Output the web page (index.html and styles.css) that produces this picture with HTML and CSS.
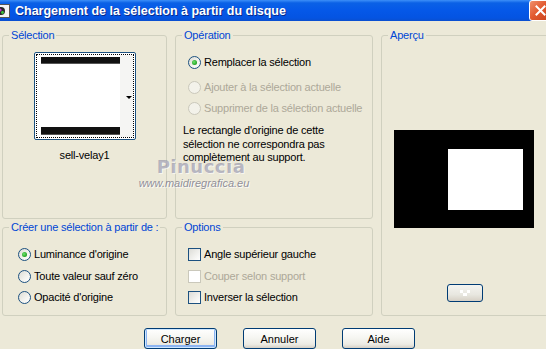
FILE: index.html
```html
<!DOCTYPE html>
<html lang="fr">
<head>
  <meta charset="UTF-8">
  <meta name="viewport" content="width=device-width, initial-scale=1.0">
  <title>Chargement de la sélection à partir du disque</title>
  <link rel="stylesheet" href="styles.css">
</head>
<body>
  <div class="window">
    <div class="titlebar">
      <span class="app-icon">
        <svg width="14" height="14" viewBox="0 0 14 14">
          <rect x="0.5" y="0.5" width="13" height="13" fill="#f4f4f4" stroke="#555"/>
          <circle cx="5" cy="7" r="4" fill="#2a2a2a"/>
          <circle cx="4" cy="6" r="1.6" fill="#d23ad0"/>
          <circle cx="6.5" cy="8.5" r="1.4" fill="#3cc43c"/>
        </svg>
      </span>
      <span class="title">Chargement de la sélection à partir du disque</span>
      <span class="close-btn">
        <svg width="11" height="11" viewBox="0 0 11 11">
          <path d="M1.5 1.5 L9.5 9.5 M9.5 1.5 L1.5 9.5" stroke="#fff" stroke-width="2" stroke-linecap="square"/>
        </svg>
      </span>
    </div>

    <div class="panels">
      <fieldset class="group group-selection">
        <legend>Sélection</legend>
        <div class="thumb">
          <div class="thumb-focus">
            <div class="thumb-image">
              <span class="bar bar-top"></span>
              <span class="bar bar-bottom"></span>
            </div>
            <div class="thumb-strip"><span class="arrow-down"></span></div>
          </div>
        </div>
        <div class="thumb-name">sell-velay1</div>
      </fieldset>

      <fieldset class="group group-operation">
        <legend>Opération</legend>
        <label class="choice op-1"><span class="radio checked"></span>Remplacer la sélection</label>
        <label class="choice op-2 disabled"><span class="radio"></span>Ajouter à la sélection actuelle</label>
        <label class="choice op-3 disabled"><span class="radio"></span>Supprimer de la sélection actuelle</label>
        <p class="note">Le rectangle d'origine de cette<br>sélection ne correspondra pas<br>complètement au support.</p>
      </fieldset>

      <fieldset class="group group-preview">
        <legend>Aperçu</legend>
        <div class="preview">
          <div class="preview-sel"></div>
        </div>
        <button class="btn btn-small" type="button">
          <svg width="14" height="8" viewBox="0 0 14 8">
            <rect x="2" y="1" width="3" height="3" fill="#fff"/>
            <rect x="9" y="1" width="3" height="3" fill="#fff"/>
            <rect x="5" y="4" width="4" height="3" fill="#fff"/>
          </svg>
        </button>
      </fieldset>

      <fieldset class="group group-source">
        <legend>Créer une sélection à partir de :</legend>
        <div class="choices">
          <label class="choice"><span class="radio checked"></span>Luminance d'origine</label>
          <label class="choice"><span class="radio"></span>Toute valeur sauf zéro</label>
          <label class="choice"><span class="radio"></span>Opacité d'origine</label>
        </div>
      </fieldset>

      <fieldset class="group group-options">
        <legend>Options</legend>
        <div class="choices">
          <label class="choice"><span class="check"></span>Angle supérieur gauche</label>
          <label class="choice disabled"><span class="check"></span>Couper selon support</label>
          <label class="choice"><span class="check"></span>Inverser la sélection</label>
        </div>
      </fieldset>
    </div>

    <div class="actions">
      <button class="btn btn-default" type="button">Charger</button>
      <button class="btn" type="button">Annuler</button>
      <button class="btn" type="button">Aide</button>
    </div>

    <div class="watermark">
      <span class="wm-name">Pinuccia</span>
      <span class="wm-url">www.maidiregrafica.eu</span>
    </div>
  </div>
</body>
</html>
```

FILE: styles.css
```css
body {
  margin: 0;
  background: #ece9d8;
  font-family: "Liberation Sans", Arial, sans-serif;
  font-size: 11px;
  letter-spacing: -0.2px;
  color: #000;
  overflow: hidden;
}
.window {
  position: relative;
  width: 546px;
  height: 349px;
  overflow: hidden;
}

/* title bar */
.titlebar {
  height: 21px;
  display: flex;
  align-items: center;
  background: linear-gradient(#3d8ff8 0%, #0b61e6 14%, #0558e8 50%, #0454e2 85%, #0a4fcf 100%);
  color: #fff;
}
.app-icon {
  width: 10px;
  height: 14px;
  overflow: hidden;
  display: flex;
  justify-content: flex-end;
  margin-right: 5px;
}
.app-icon svg {
  flex: none;
}
.title {
  font-weight: bold;
  font-size: 12.5px;
  letter-spacing: 0;
  text-shadow: 1px 1px 0 #0a2a8a;
}
.close-btn {
  margin-left: auto;
  margin-right: -6px;
  width: 21px;
  height: 19px;
  border: 1px solid #fff;
  border-radius: 3px;
  background: linear-gradient(135deg, #f0906e 0%, #e25a30 45%, #c7401a 100%);
  display: flex;
  align-items: center;
  justify-content: center;
  align-self: flex-start;
}

/* group boxes */
.panels {
  display: grid;
  grid-template-columns: 165px 198px 172px;
  grid-template-rows: 190px 95px;
  column-gap: 8px;
  row-gap: 2px;
  padding: 8px 0 0 2px;
}
.group {
  margin: 0;
  padding: 0;
  min-width: 0;
  border: 1px solid #d0d0bf;
  border-radius: 3px;
}
.group legend {
  color: #0046d5;
  padding: 0 2px;
  margin-left: 6px;
  line-height: 13px;
  white-space: nowrap;
}
.group-preview {
  grid-column: 3;
  grid-row: 1 / span 2;
}
.group-source {
  grid-column: 1;
  grid-row: 2;
}
.group-options {
  grid-column: 2;
  grid-row: 2;
}

/* selection thumbnail */
.thumb {
  width: 102px;
  height: 88px;
  box-sizing: border-box;
  margin: 10px auto 0;
  border: 1px solid #1c5180;
  border-radius: 2px;
  padding: 1px;
  background: #fff;
}
.thumb-focus {
  height: 100%;
  box-sizing: border-box;
  border: 1px dotted #000;
  display: grid;
  grid-template-columns: 1fr 13px;
}
.thumb-image {
  display: flex;
  flex-direction: column;
  justify-content: space-between;
  padding: 2px 0 2px 4px;
}
.bar {
  display: block;
  background: #111;
  border-bottom: 1px solid #555;
}
.bar-top {
  height: 6px;
}
.bar-bottom {
  height: 7px;
}
.thumb-strip {
  background: #f5f5f3;
  display: flex;
  align-items: center;
  justify-content: flex-end;
  padding-right: 1px;
  padding-top: 2px;
}
.arrow-down {
  width: 0;
  height: 0;
  border-left: 3px solid transparent;
  border-right: 3px solid transparent;
  border-top: 3px solid #000;
}
.thumb-name {
  text-align: center;
  margin-top: 9px;
  line-height: 13px;
}

/* radios and checkboxes */
.choice {
  display: flex;
  align-items: center;
  gap: 3px;
  height: 13px;
  line-height: 13px;
  white-space: nowrap;
}
.choice.disabled {
  color: #aca899;
}
.group-operation .choice {
  margin-left: 12px;
}
.op-1 {
  margin-top: 14px;
}
.op-2 {
  margin-top: 12px;
}
.op-3 {
  margin-top: 8px;
}
.choices {
  display: flex;
  flex-direction: column;
  gap: 8.5px;
  margin: 14px 0 0 15px;
}
.group-options .choices {
  margin-left: 12px;
}
.radio {
  flex: none;
  position: relative;
  width: 13px;
  height: 13px;
  box-sizing: border-box;
  border: 1px solid #1c5180;
  border-radius: 50%;
  background: linear-gradient(135deg, #dcdcd4 0%, #f4f4f0 60%, #ffffff 100%);
}
.radio.checked::after {
  content: "";
  position: absolute;
  left: 3px;
  top: 3px;
  width: 5px;
  height: 5px;
  border-radius: 50%;
  background: radial-gradient(circle at 40% 40%, #6fe36f, #21a121 70%);
}
.disabled .radio {
  border-color: #cac8bb;
  background: #f3f2ea;
}
.check {
  flex: none;
  width: 13px;
  height: 13px;
  box-sizing: border-box;
  border: 1px solid #1c5180;
  background: linear-gradient(135deg, #dcdcd7 0%, #f2f2ef 60%, #ffffff 100%);
}
.disabled .check {
  border-color: #cac8bb;
  background: #fff;
}
.note {
  margin: 9px 0 0 7px;
  line-height: 13.5px;
}

/* preview */
.preview {
  width: 140px;
  height: 98px;
  margin: 88px 0 0 12px;
  background: #000;
  padding: 19px 0 0 54px;
  box-sizing: border-box;
}
.preview-sel {
  width: 75px;
  height: 61px;
  background: #fff;
}

/* buttons */
.btn {
  font-family: inherit;
  font-size: 11px;
  letter-spacing: 0;
  color: #000;
  width: 73px;
  height: 21px;
  padding: 0;
  border: 1px solid #003c74;
  border-radius: 3px;
  background: linear-gradient(#ffffff 0%, #f6f6f2 45%, #ecebe4 80%, #d6d0c5 100%);
}
.btn-default {
  box-shadow: inset 0 0 0 1px #cee7ff, inset 0 -1px 0 2px #8cb4f2;
}
.btn-small {
  display: flex;
  align-items: center;
  justify-content: center;
  width: 36px;
  height: 18px;
  margin: 56px 0 0 65px;
  background: linear-gradient(#f4f4f0 0%, #e8e7e0 60%, #d6d0c5 100%);
}
.actions {
  display: flex;
  gap: 26px;
  padding-left: 144px;
  margin-top: 12px;
}

/* watermark */
.watermark {
  position: absolute;
  left: 133px;
  top: 157px;
  display: flex;
  flex-direction: column;
  align-items: center;
  width: 122px;
  pointer-events: none;
}
.wm-name {
  font-family: "DejaVu Sans", sans-serif;
  font-size: 18px;
  font-weight: bold;
  letter-spacing: 0.5px;
  color: rgba(120, 120, 150, 0.5);
  text-shadow: 1px 1px 0 rgba(255, 255, 255, 0.6);
  line-height: 20px;
  margin-left: 14px;
}
.wm-url {
  font-size: 11px;
  font-style: italic;
  letter-spacing: 0;
  color: rgba(110, 110, 130, 0.75);
  text-shadow: 1px 1px 0 rgba(255, 255, 255, 0.8);
  line-height: 13px;
}
```
